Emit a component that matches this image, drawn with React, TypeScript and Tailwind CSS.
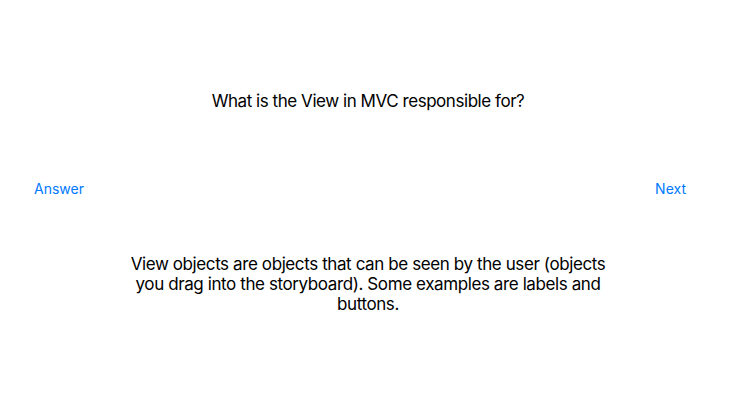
import React from "react";

export default function App() {
  return (
    <div
      className="w-[736px] h-[414px] bg-white flex flex-col text-black"
      style={{ fontFamily: "Inter, 'Noto Sans', sans-serif" }}
    >
      <div className="pt-[90px] h-[112px] text-center text-[17px] leading-[22px] tracking-[-0.45px]">
        What is the View in MVC responsible for?
      </div>
      <div className="mt-[67px] flex justify-between pl-[34px] pr-[50px] text-[14px] leading-[20px] text-[#007aff] tracking-[0px]">
        <span>Answer</span>
        <span>Next</span>
      </div>
      <div className="mt-[55px] mx-auto w-[490px] text-center text-[17px] leading-[20px] tracking-[-0.4px]">
        View objects are objects that can be seen by the user (objects you drag into the storyboard). Some examples are labels and buttons.
      </div>
    </div>
  );
}
